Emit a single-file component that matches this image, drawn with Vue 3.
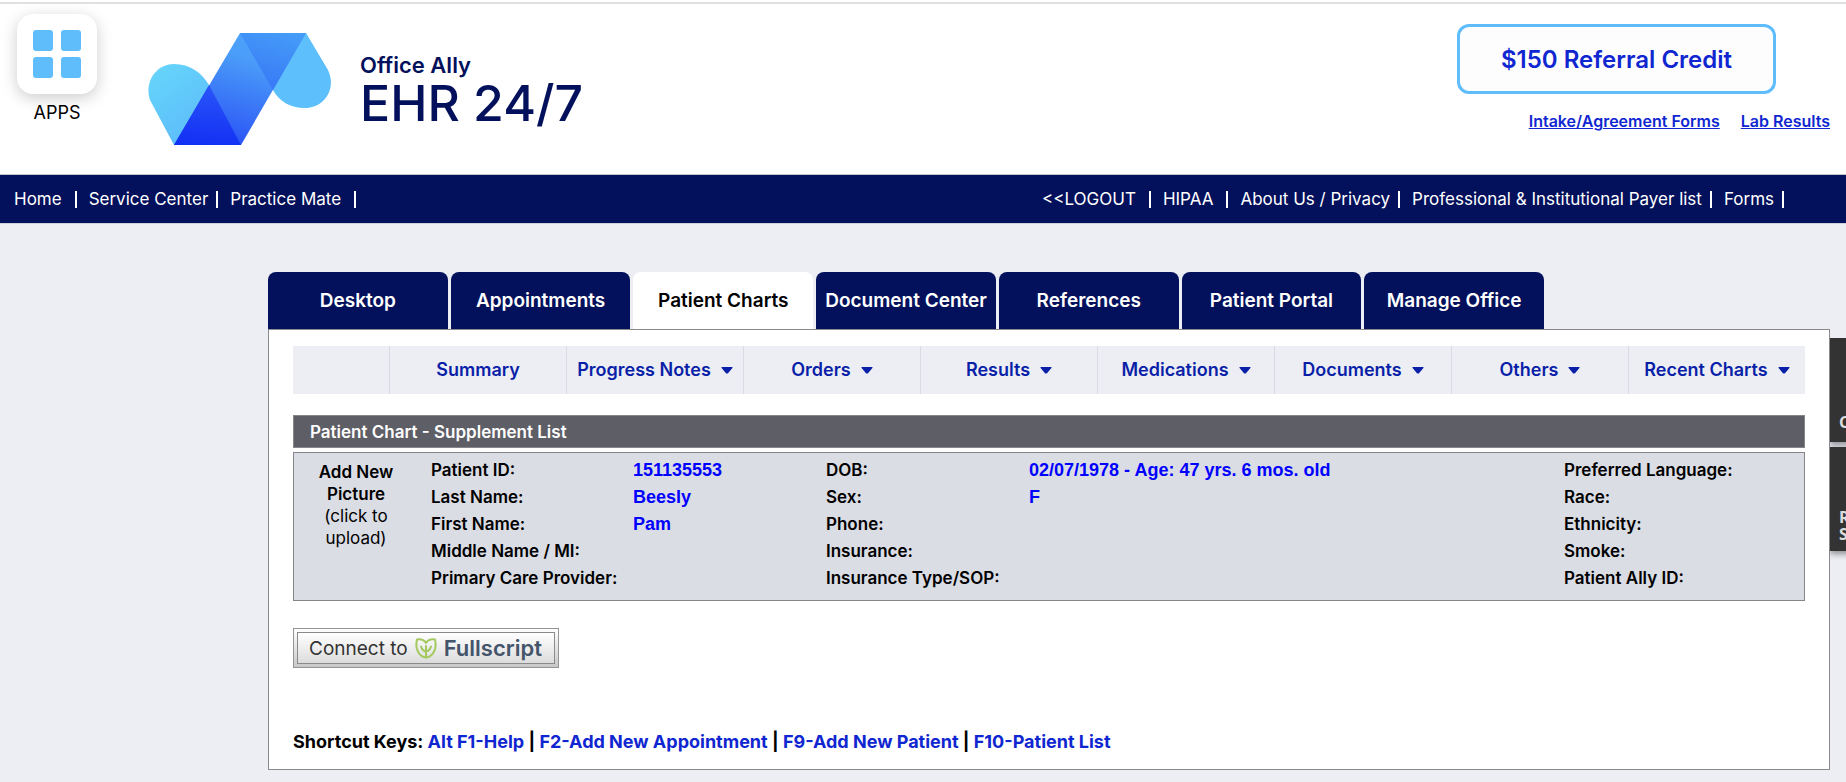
<template>
  <div class="page">
    <header class="header">
      <button type="button" class="apps">
        <span class="apps-tile">
          <svg width="48" height="48" viewBox="0 0 48 48" fill="#5fbdfb" aria-hidden="true">
            <rect width="20" height="21" rx="3" />
            <rect x="28" width="20" height="21" rx="3" />
            <rect y="27" width="20" height="21" rx="3" />
            <rect x="28" y="27" width="20" height="21" rx="3" />
          </svg>
        </span>
        <span>APPS</span>
      </button>

      <div class="brand">
        <svg class="brand-mark" width="184" height="112" viewBox="0 0 184 112" aria-hidden="true">
          <defs>
            <linearGradient id="leaf" x1="0" y1="0" x2="0.6" y2="1">
              <stop offset="0" stop-color="#66d6fb" />
              <stop offset="1" stop-color="#5dbcfa" />
            </linearGradient>
            <linearGradient id="band" x1="0.75" y1="0" x2="0.4" y2="1">
              <stop offset="0" stop-color="#4ca3fa" />
              <stop offset="0.25" stop-color="#4b9ef9" />
              <stop offset="1" stop-color="#2a52f5" />
            </linearGradient>
            <linearGradient id="base" x1="0.5" y1="0" x2="0.4" y2="1">
              <stop offset="0" stop-color="#2a55f8" />
              <stop offset="1" stop-color="#1230f4" />
            </linearGradient>
            <linearGradient id="fold" x1="0.8" y1="0" x2="0.4" y2="1">
              <stop offset="0" stop-color="#459cf8" />
              <stop offset="1" stop-color="#3878f6" />
            </linearGradient>
          </defs>
          <path d="M26 112L2 67C-4 49 8 31 26 31C42 31 54 40 61 52L68 66L40 112Z" fill="url(#leaf)" />
          <path d="M158 0L180 37C189 56 176 75 157 75C142 75 131 68 125 57L110 30Z" fill="#5dbffb" />
          <path d="M92 0H158L93 112H26Z" fill="url(#band)" />
          <path d="M61 52L93 112H26Z" fill="url(#base)" />
          <path d="M92 0H158L125 57Z" fill="url(#fold)" />
        </svg>
        <div class="brand-text">
          <span class="brand-company">Office Ally</span>
          <span class="brand-product">EHR 24/7</span>
        </div>
      </div>

      <div class="header-right">
        <button type="button" class="referral">$150 Referral Credit</button>
        <div class="header-links">
          <a href="#">Intake/Agreement Forms</a>
          <a href="#">Lab Results</a>
        </div>
      </div>
    </header>

    <nav class="topnav">
      <ul>
        <li v-for="item in leftLinks" :key="item.text" :class="{ tight: item.tight }">
          <a href="#">{{ item.text }}</a>
        </li>
      </ul>
      <ul>
        <li v-for="item in rightLinks" :key="item.text" :class="{ tight: item.tight }">
          <a href="#">{{ item.text }}</a>
        </li>
      </ul>
    </nav>

    <main class="main">
      <nav class="tabs">
        <a v-for="tab in tabs" :key="tab" href="#" :class="{ active: tab === activeTab }">{{ tab }}</a>
      </nav>

      <section class="panel">
        <nav class="submenu">
          <span class="submenu-blank"></span>
          <a v-for="item in menu" :key="item.text" href="#">
            {{ item.text }}
            <svg v-if="item.arrow" width="12" height="7" viewBox="0 0 12 7" fill="currentColor" aria-hidden="true">
              <path d="M1 0H11Q12 0 11.4 1L7 6.2Q6 7 5 6.2L.6 1Q0 0 1 0Z" />
            </svg>
          </a>
        </nav>

        <h1 class="chart-title">Patient Chart - Supplement List</h1>

        <div class="patient">
          <a href="#" class="photo"><b>Add New Picture</b> (click to upload)</a>
          <table>
            <tbody>
              <tr v-for="row in rows" :key="row[0]">
                <th scope="row" class="col-label">{{ row[0] }}</th>
                <td class="col-value">{{ row[1] }}</td>
                <th scope="row" class="col-label2">{{ row[2] }}</th>
                <td>{{ row[3] }}</td>
                <th scope="row" class="col-last">{{ row[4] }}</th>
              </tr>
            </tbody>
          </table>
        </div>

        <button type="button" class="fullscript">
          <span class="fullscript-inner">
            <span>Connect to</span>
            <svg width="22" height="21" viewBox="0 0 22 21" fill="none" stroke="#a3c95f" stroke-width="2" stroke-linecap="round" stroke-linejoin="round" aria-hidden="true">
              <path d="M11 5C9 2 5 1 2 1.5C.5 8 2 14 6 17.500Q8.500 19.500 11 19.500Q13.500 19.500 16 17.500C20 14 21.500 8 20 1.500C17 1 13 2 11 5Z" />
              <path d="M11 19V8M11 13.500Q7 12.500 6 8.500M11 13.500Q15 12.500 16 8.500" />
            </svg>
            <b>Fullscript</b>
          </span>
        </button>

        <p class="shortcuts">
          Shortcut Keys:
          <template v-for="(key, i) in shortcuts" :key="key">
            <template v-if="i"> | </template>
            <a href="#">{{ key }}</a>
          </template>
        </p>
      </section>
    </main>

    <aside class="side-tabs">
      <button type="button" class="raised"><span>C</span></button>
      <button type="button"><span>R</span><span>S</span></button>
    </aside>
  </div>
</template>

<script setup>
const leftLinks = [
  { text: 'Home' },
  { text: 'Service Center', tight: true },
  { text: 'Practice Mate' }
];

const rightLinks = [
  { text: '<<LOGOUT' },
  { text: 'HIPAA' },
  { text: 'About Us / Privacy', tight: true },
  { text: 'Professional & Institutional Payer list', tight: true },
  { text: 'Forms', tight: true }
];

const activeTab = 'Patient Charts';
const tabs = [
  'Desktop',
  'Appointments',
  'Patient Charts',
  'Document Center',
  'References',
  'Patient Portal',
  'Manage Office'
];

const menu = [
  { text: 'Summary' },
  { text: 'Progress Notes', arrow: true },
  { text: 'Orders', arrow: true },
  { text: 'Results', arrow: true },
  { text: 'Medications', arrow: true },
  { text: 'Documents', arrow: true },
  { text: 'Others', arrow: true },
  { text: 'Recent Charts', arrow: true }
];

// label, value, label, value, label
const rows = [
  ['Patient ID:', '151135553', 'DOB:', '02/07/1978 - Age: 47 yrs. 6 mos. old', 'Preferred Language:'],
  ['Last Name:', 'Beesly', 'Sex:', 'F', 'Race:'],
  ['First Name:', 'Pam', 'Phone:', '', 'Ethnicity:'],
  ['Middle Name / MI:', '', 'Insurance:', '', 'Smoke:'],
  ['Primary Care Provider:', '', 'Insurance Type/SOP:', '', 'Patient Ally ID:']
];

const shortcuts = ['Alt F1-Help', 'F2-Add New Appointment', 'F9-Add New Patient', 'F10-Patient List'];
</script>

<style>
body {
  margin: 0;
  background: #edeef4;
}
</style>

<style scoped>
.page {
  min-height: 100vh;
  box-sizing: border-box;
  padding-top: 2px;
  background: linear-gradient(#fff 2px, #edeef4 2px);
  font-family: Inter, 'Liberation Sans', sans-serif;
  color: #000;
}

a {
  color: inherit;
  text-decoration: none;
}

button {
  padding: 0;
  font: inherit;
  color: inherit;
  cursor: pointer;
}

.header {
  display: flex;
  align-items: flex-start;
  height: 170px;
  padding: 0 16px 0 17px;
  background: #fff;
  border-top: 2px solid #e0e0e0;
}

.apps {
  display: flex;
  flex-direction: column;
  align-items: center;
  gap: 8px;
  margin-top: 10px;
  border: 0;
  background: none;
  font-size: 18px;
  line-height: 22px;
}

.apps-tile {
  display: flex;
  align-items: center;
  justify-content: center;
  width: 80px;
  height: 80px;
  border-radius: 16px;
  background: #fff;
  box-shadow: 0 4px 16px rgba(0, 0, 0, 0.2);
}

.brand {
  display: flex;
  gap: 28px;
  margin: 29px 0 0 51px;
  color: #03105b;
}

.brand-text {
  display: flex;
  flex-direction: column;
  padding-top: 19px;
}

.brand-company {
  font-size: 22px;
  font-weight: 600;
  line-height: 26px;
}

.brand-product {
  font-size: 50px;
  font-weight: 500;
  line-height: 50px;
}

.header-right {
  display: flex;
  flex-direction: column;
  align-items: flex-end;
  gap: 17px;
  margin: 20px 0 0 auto;
  color: #0f26d0;
  font-weight: 600;
}

.referral {
  height: 70px;
  margin-right: 54px;
  padding: 0 41px;
  border: 3px solid #5fbdfb;
  border-radius: 12px;
  background: #fdfdfe;
  font-size: 24px;
}

.header-links {
  display: flex;
  gap: 21px;
  font-size: 16px;
  line-height: 20px;
}

.header-links a {
  text-decoration: underline;
}

.topnav {
  display: flex;
  justify-content: space-between;
  padding: 0 62px 0 14px;
  border-top: 1px solid #c4c4c4;
  border-bottom: 1px solid #d0d1dc;
  background: #03105b;
  color: #fff;
  font-size: 17px;
  line-height: 48px;
}

.topnav ul {
  display: flex;
  gap: 12px;
  margin: 0;
  padding: 0;
  list-style: none;
}

.topnav li {
  display: flex;
  align-items: center;
  gap: 13px;
}

.topnav li.tight {
  gap: 8px;
}

.topnav li::after {
  content: '';
  width: 2px;
  height: 17px;
  background: #fff;
}

.main {
  padding: 48px 16px 12px 268px;
}

.tabs {
  display: flex;
  gap: 3px;
  max-width: 1276px;
}

.tabs a {
  flex: 1 1 0;
  border-radius: 8px 8px 0 0;
  background: #03105b;
  color: #fff;
  font-size: 19px;
  font-weight: 600;
  line-height: 57px;
  text-align: center;
  white-space: nowrap;
}

.tabs a.active {
  background: #fff;
  color: #000;
}

.panel {
  padding: 16px 24px 13px;
  border: 1px solid #8a8a8c;
  background: #fff;
}

.submenu {
  display: flex;
  background: #edeef4;
  color: #0a1fa8;
  font-size: 18px;
  font-weight: 600;
  line-height: 48px;
}

.submenu-blank {
  width: 96px;
}

.submenu a {
  display: flex;
  flex: 1 1 0;
  align-items: center;
  justify-content: center;
  gap: 10px;
  border-left: 1px solid #d9dbe3;
  white-space: nowrap;
}

.chart-title {
  margin: 21px 0 4px;
  padding: 2px 16px 0;
  border: 1px solid #85858a;
  background: #5e5e67;
  color: #fff;
  font-size: 17px;
  font-weight: 600;
  line-height: 29px;
}

.patient {
  display: flex;
  padding: 4px 0 8px;
  border: 1px solid #85858a;
  background: #dbdde4;
  font-size: 17px;
}

.photo {
  width: 86px;
  margin: 4px 32px 0 19px;
  line-height: 22px;
  text-align: center;
}

.photo b {
  font-weight: 600;
}

.patient table {
  flex: 1;
  border-collapse: collapse;
  table-layout: fixed;
}

.patient th,
.patient td {
  height: 27px;
  padding: 0;
  line-height: 27px;
  text-align: left;
  white-space: nowrap;
}

.patient th {
  font-weight: 600;
}

.patient td {
  color: #00f;
  font-family: 'Liberation Sans', Arial, sans-serif;
  font-size: 18px;
  font-weight: 700;
}

.col-label {
  width: 202px;
}

.col-value {
  width: 193px;
}

.col-label2 {
  width: 203px;
}

.col-last {
  width: 240px;
}

.fullscript {
  display: block;
  margin-top: 27px;
  padding: 3px;
  border: 1px solid #949494;
  background: linear-gradient(#fff, #c8c8c8);
}

.fullscript-inner {
  display: flex;
  align-items: center;
  gap: 7px;
  height: 30px;
  padding: 0 12px 0 11px;
  border: 1px solid #8a8a8a;
  background: linear-gradient(#fff, #dcdcdc);
  color: #333;
  font-size: 19px;
}

.fullscript b {
  color: #44546a;
  font-size: 22px;
  font-weight: 600;
}

.shortcuts {
  margin: 60px 0 0;
  font-size: 18px;
  font-weight: 700;
  line-height: 28px;
}

.shortcuts a {
  color: #0f26d0;
}

.side-tabs {
  position: absolute;
  top: 338px;
  right: 0;
  display: flex;
  flex-direction: column;
  gap: 5px;
  width: 16px;
  padding-bottom: 12px;
  overflow: hidden;
}

.side-tabs button {
  display: flex;
  flex-direction: column;
  justify-content: flex-end;
  align-items: flex-start;
  width: 40px;
  height: 104px;
  padding: 0 0 8px 9px;
  border: 0;
  background: #333;
  box-shadow: 0 3px 6px rgba(0, 0, 0, 0.4);
  color: #ddd;
  font-family: 'Open Sans', sans-serif;
  font-size: 16px;
  font-weight: 700;
  line-height: 17px;
}

.side-tabs button.raised {
  padding-bottom: 11px;
}
</style>
